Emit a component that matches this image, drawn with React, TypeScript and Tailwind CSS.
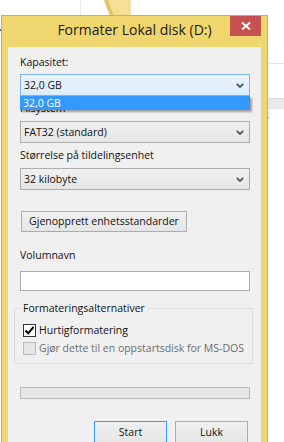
import { ReactNode } from "react";

const Chevron = () => (
  <svg width="8" height="5" viewBox="0 0 8 5" className="shrink-0">
    <path
      d="M0.8 0.8 L4 4 L7.2 0.8"
      fill="none"
      stroke="#4a4a4a"
      strokeWidth="1.7"
    />
  </svg>
);

function Combo({
  value,
  focused,
  children,
}: {
  value: string;
  focused?: boolean;
  children?: ReactNode;
}) {
  return (
    <div className="relative">
      <div
        className={
          focused
            ? "h-[22px] flex items-center pl-[3px] pr-[5px] border border-[#7eb4ea] bg-gradient-to-b from-[#ecf4fc] to-[#dcecfc]"
            : "h-[22px] flex items-center pl-[3px] pr-[5px] border border-[#acacac] bg-gradient-to-b from-[#f0f0f0] to-[#e5e5e5]"
        }
      >
        <span className="flex-1">{value}</span>
        <Chevron />
      </div>
      {children}
    </div>
  );
}

function Label({ text }: { text: string }) {
  return <div className="h-[15px]">{text}</div>;
}

export default function App() {
  return (
    <div className="relative w-[284px] h-[442px] overflow-hidden bg-white font-['Open_Sans',sans-serif]">

      {/* desktop behind the dialog */}

      <div className="absolute left-[80px] top-0 w-px h-[15px] bg-[#ebebeb]" />

      <svg
        className="absolute left-[102px] top-0"
        width="30"
        height="16"
        viewBox="0 0 30 16"
      >
        <polygon points="2,0 28,0 28,16 8,16" fill="#f6df96" />
        <polygon points="2,0 6,0 12,16 8,16" fill="#e2c468" />
        <line x1="28" y1="0" x2="28" y2="16" stroke="#e8cf7c" strokeWidth="1" />
      </svg>

      <div className="absolute left-0 top-[29px] w-[2px] h-[2px] bg-[#3d6fa6]" />

      <div className="absolute left-[268px] top-[63px] w-[16px] h-px bg-[#e3e3e3]" />
      <div className="absolute left-[268px] top-[98px] w-[16px] h-[11px] bg-[#e9e9e9] border-t border-[#dadada]" />
      <div className="absolute left-[263px] top-[109px] text-[10.5px] leading-[15px] text-[#6b86b0]">
        3
      </div>

      {/* dialog window */}

      <div className="absolute left-[1px] top-[15px] w-[267px] h-[440px] border border-[#c9b25a] bg-[#f0d66e] px-[6px]">

        {/* title bar */}

        <div className="relative h-[31px]">
          <div className="pt-[4px] text-center text-[14px] leading-[20px] text-[#1a1a1a]">
            Formater Lokal disk (D:)
          </div>

          <div className="absolute top-0 right-0 w-[31px] h-[20px] bg-[#c75050] flex items-center justify-center">
            <svg width="10" height="8" viewBox="0 0 10 8">
              <path
                d="M1 0.5 L9 7.5 M9 0.5 L1 7.5"
                stroke="#ffffff"
                strokeWidth="1.9"
              />
            </svg>
          </div>
        </div>

        {/* client area */}

        <div className="h-full bg-[#f0f0f0] pl-[12px] pr-[11px] pt-[8px] text-[10.5px] leading-[15px] text-[#111]">

          <Label text="Kapasitet:" />

          <div className="mt-[4px]">
            <Combo value="32,0 GB" focused>
              <div className="absolute left-0 right-0 top-full h-[14px] bg-[#3399ff] text-white leading-[14px] pl-[3px] shadow-[2px_2px_2px_rgba(0,0,0,0.35)] z-10">
                32,0 GB
              </div>
            </Combo>
          </div>

          <div className="mt-[5px]">
            <Label text="Filsystem" />
          </div>

          <div className="mt-[5px]">
            <Combo value="FAT32 (standard)" />
          </div>

          <div className="mt-[5px]">
            <Label text="Størrelse på tildelingsenhet" />
          </div>

          <div className="mt-[5px]">
            <Combo value="32 kilobyte" />
          </div>

          <button className="mt-[21px] ml-[1px] w-[166px] h-[21px] border border-[#acacac] bg-gradient-to-b from-[#f0f0f0] to-[#e5e5e5] flex items-center justify-center">
            Gjenopprett enhetsstandarder
          </button>

          <div className="mt-[16px]">
            <Label text="Volumnavn" />
          </div>

          <div className="mt-[8px] h-[20px] bg-white border border-[#abadb3]" />

          {/* Formatting options */}

          <div className="relative mt-[17px] -ml-[6px] -mr-[3px] h-[56px] border border-[#dcdcdc] pl-[8px] pt-[15px]">

            <div className="absolute -top-[8px] left-[5px] px-[3px] bg-[#f0f0f0]">
              Formateringsalternativer
            </div>

            <div className="flex items-center gap-[3px] h-[13px]">
              <div className="w-[13px] h-[13px] border border-[#333] bg-white flex items-center justify-center">
                <svg width="11" height="11" viewBox="0 0 11 11">
                  <path
                    d="M1.5 5.5 L4.2 8.3 L9.5 2"
                    fill="none"
                    stroke="#000"
                    strokeWidth="2"
                  />
                </svg>
              </div>
              <span>Hurtigformatering</span>
            </div>

            <div className="flex items-center gap-[3px] h-[13px] mt-[5px]">
              <div className="w-[13px] h-[13px] border border-[#bcbcbc] bg-[#e6e6e6]" />
              <span className="text-[#6d6d6d]">
                Gjør dette til en oppstartsdisk for MS-DOS
              </span>
            </div>
          </div>

          {/* progress */}

          <div className="mt-[23px] h-[12px] border border-[#bcbcbc] bg-[#e6e6e6]" />

          {/* actions */}

          <div className="mt-[22px] flex justify-end gap-[8px] pr-[2px]">
            <button className="w-[73px] h-[23px] border border-[#3399ff] bg-gradient-to-b from-[#f0f0f0] to-[#e5e5e5]">
              Start
            </button>
            <button className="w-[73px] h-[23px] border border-[#acacac] bg-gradient-to-b from-[#f0f0f0] to-[#e5e5e5]">
              Lukk
            </button>
          </div>

        </div>

      </div>

    </div>
  );
}
